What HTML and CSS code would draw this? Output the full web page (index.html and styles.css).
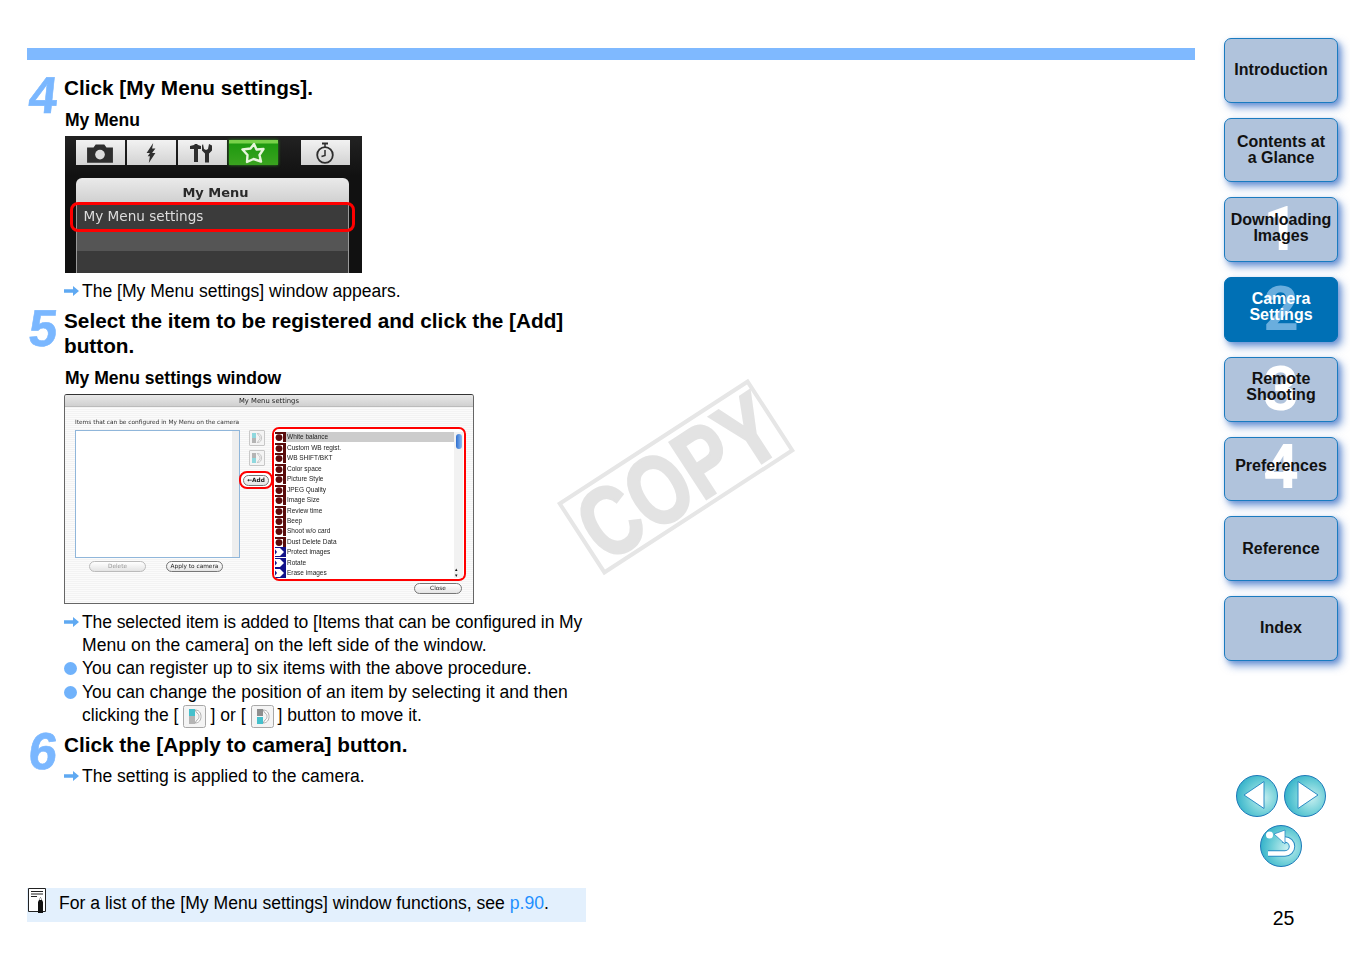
FILE: index.html
```html
<!DOCTYPE html>
<html lang="en">
<head>
<meta charset="utf-8">
<title>My Menu settings</title>
<link rel="stylesheet" href="styles.css">
</head>
<body>
<svg class="defs" width="0" height="0" aria-hidden="true">
  <symbol id="arrow" viewBox="0 0 15 10"><path d="M0 3.200h9V0l6 5-6 5V6.800H0z" fill="#5fa9f2"/></symbol>
  <symbol id="dot" viewBox="0 0 12 10"><rect width="12" height="10" fill="#fff"/><path d="M1 0h11v10H9V2H1z" fill="#5a0c0c"/><circle cx="5" cy="5.600" r="3.400" fill="#5a0c0c"/></symbol>
  <symbol id="play" viewBox="0 0 12 10"><rect width="12" height="10" fill="#12128a"/><path d="M0 1h6l4 4-4 4H0l3-4z" fill="#fff"/><rect x="0" y="0" width="1" height="10" fill="#fff"/></symbol>
  <symbol id="mover" viewBox="0 0 23 23"><rect x=".5" y=".5" width="22" height="22" rx="2" fill="#f4f4f4" stroke="#a8a8a8"/><path d="M12 5c4 0 6 3 6 6.500s-2 6.500-6 6.500l2-3c1.500-.7 2-2 2-3.500s-.5-3-2-3.500z" fill="#fff" stroke="#9a9a9a" stroke-width=".8"/></symbol>
</svg>

<div class="page">
  <main class="main">
    <div class="topbar"></div>

    <section class="step step-four">
      <div class="num"><span class="digit">4</span></div>
      <div class="body">
        <h2>Click [My Menu settings].</h2>
        <h3>My Menu</h3>
        <div class="cam">
          <div class="cam-tabs">
            <div class="tab">
              <svg width="28" height="22" viewBox="0 0 26 20"><path d="M1 5h6l2-3h8l2 3h6v14H1z" fill="#2e2e2e"/><circle cx="13" cy="11.500" r="4.500" fill="#ddd"/></svg>
            </div>
            <div class="tab">
              <svg width="14" height="22" viewBox="0 0 12 20"><path d="M8 1L2 10h3l-2 3 2 0-1 6 6-9H7l3-4H7z" fill="#2e2e2e"/></svg>
            </div>
            <div class="tab">
              <svg width="26" height="22" viewBox="0 0 26 20"><path d="M1 3l4-1 1-1h2l1 1 3 1v3H9v13H5V6H1zM14 1l1 5 2 1 2-1 1-5 3 1.500v5l-3 3v9h-4v-9l-3-3v-5z" fill="#2e2e2e"/></svg>
            </div>
            <div class="tab tab-on">
              <svg width="26" height="22" viewBox="0 0 26 22"><path d="M14 2l2.500 5.500 7-.5-4 6 1.500 6.500-7.500-2.500-6.500 3 .5-7-5-5.500 8-1z" fill="none" stroke="#e8f5dc" stroke-width="2.400" stroke-linejoin="round"/></svg>
            </div>
            <div class="tab tab-timer">
              <svg width="20" height="22" viewBox="0 0 20 22"><path d="M7 1.500h6" stroke="#2e2e2e" stroke-width="2"/><path d="M10 2v3" stroke="#2e2e2e" stroke-width="1.500"/><circle cx="10" cy="13" r="7.800" fill="none" stroke="#2e2e2e" stroke-width="1.800"/><path d="M10 8v5.500l-3.500 1" fill="none" stroke="#2e2e2e" stroke-width="1.500"/></svg>
            </div>
          </div>
          <div class="cam-menu">
            <div class="cam-title">My Menu</div>
            <div class="cam-row">My Menu settings</div>
            <div class="cam-empty"></div>
            <div class="cam-rest"></div>
            <div class="cam-ring"></div>
          </div>
        </div>
        <p class="res"><svg class="arrow"><use href="#arrow"/></svg>The [My Menu settings] window appears.</p>
      </div>
    </section>

    <section class="step step-five">
      <div class="num"><span class="digit">5</span></div>
      <div class="body">
        <h2>Select the item to be registered and click the [Add]<br>button.</h2>
        <h3 class="sub-window">My Menu settings window</h3>
        <div class="dlg">
          <div class="dlg-title">My Menu settings</div>
          <div class="dlg-body">
            <div class="dlg-label">Items that can be configured in My Menu on the camera</div>
            <div class="dlg-cols">
              <div class="left-col">
                <div class="left-list"><div class="left-scroll"></div></div>
                <div class="left-btns">
                  <span class="mac-btn btn-delete">Delete</span>
                  <span class="mac-btn btn-apply">Apply to camera</span>
                </div>
              </div>
              <div class="mid-col">
                <div class="mini"><svg width="16" height="16"><use href="#mover"/></svg><i class="t1"></i><i class="g2"></i></div>
                <div class="mini"><svg width="16" height="16"><use href="#mover"/></svg><i class="g1"></i><i class="t2"></i></div>
                <div class="add-ring"><span class="mac-btn btn-add">←Add</span></div>
              </div>
              <div class="right-col">
                <div class="list-ring">
                  <ul class="items">
                    <li class="sel"><svg><use href="#dot"/></svg>White balance</li>
                    <li><svg><use href="#dot"/></svg>Custom WB regist.</li>
                    <li><svg><use href="#dot"/></svg>WB SHIFT/BKT</li>
                    <li><svg><use href="#dot"/></svg>Color space</li>
                    <li><svg><use href="#dot"/></svg>Picture Style</li>
                    <li><svg><use href="#dot"/></svg>JPEG Quality</li>
                    <li><svg><use href="#dot"/></svg>Image Size</li>
                    <li><svg><use href="#dot"/></svg>Review time</li>
                    <li><svg><use href="#dot"/></svg>Beep</li>
                    <li><svg><use href="#dot"/></svg>Shoot w/o card</li>
                    <li><svg><use href="#dot"/></svg>Dust Delete Data</li>
                    <li><svg><use href="#play"/></svg>Protect images</li>
                    <li><svg><use href="#play"/></svg>Rotate</li>
                    <li><svg><use href="#play"/></svg>Erase images</li>
                  </ul>
                  <div class="scroll"><div class="thumb"></div><div class="sarrows">▴<br>▾</div></div>
                </div>
                <div class="close-row"><span class="mac-btn btn-close">Close</span></div>
              </div>
            </div>
          </div>
        </div>
        <div class="notes">
          <p class="res tight"><svg class="arrow"><use href="#arrow"/></svg>The selected item is added to [Items that can be configured in My<br>Menu on the camera] on the left side of the window.</p>
          <p class="bul"><i class="bullet"></i>You can register up to six items with the above procedure.</p>
          <p class="bul"><i class="bullet"></i>You can change the position of an item by selecting it and then<br>clicking the [<span class="inl"><svg width="23" height="23"><use href="#mover"/></svg><i class="t1"></i><i class="g2"></i></span>] or [<span class="inl"><svg width="23" height="23"><use href="#mover"/></svg><i class="g1"></i><i class="t2"></i></span>] button to move it.</p>
        </div>
      </div>
    </section>

    <section class="step step-six">
      <div class="num"><span class="digit">6</span></div>
      <div class="body">
        <h2>Click the [Apply to camera] button.</h2>
        <p class="res res-six"><svg class="arrow"><use href="#arrow"/></svg>The setting is applied to the camera.</p>
      </div>
    </section>

    <aside class="note">
      <svg class="note-ico" width="19" height="26" viewBox="0 0 19 26"><path d="M.5.5h17v23H.5z" fill="#fff" stroke="#222"/><path d="M3 3.500h12M3 6h12M3 8.500h6" stroke="#222"/><path d="M10 14l2.500-5 2.500 5v11h-5z" fill="#111"/><path d="M11.300 12h2.400l-1.200-2.500z" fill="#fff"/></svg>
      <span>For a list of the [My Menu settings] window functions, see <a href="#p90">p.90</a>.</span>
    </aside>

    <div class="copy"><span>COPY</span></div>
  </main>

  <nav class="side">
    <div class="btn">Introduction</div>
    <div class="btn">Contents at<br>a Glance</div>
    <div class="btn"><b class="big">1</b><span>Downloading<br>Images</span></div>
    <div class="btn btn-on"><b class="big">2</b><span>Camera<br>Settings</span></div>
    <div class="btn"><b class="big">3</b><span>Remote<br>Shooting</span></div>
    <div class="btn"><b class="big big-four">4</b><span class="one-line">Preferences</span></div>
    <div class="btn">Reference</div>
    <div class="btn">Index</div>

    <div class="arrows">
      <div class="circle"><svg width="42" height="42" viewBox="0 0 42 42"><path d="M8 21L28 7.500v27z" fill="#fff" stroke="#2a8cc4" stroke-width="1"/></svg></div>
      <div class="circle"><svg width="42" height="42" viewBox="0 0 42 42"><path d="M34 21L14 7.500v27z" fill="#fff" stroke="#2a8cc4" stroke-width="1"/></svg></div>
    </div>
    <div class="circle circle-back"><svg width="42" height="42" viewBox="0 0 42 42"><path d="M8 29.500h17a7 7 0 0 0 0-14h-3" fill="none" stroke="#2a8cc4" stroke-width="6.500"/><path d="M8 29.500h17a7 7 0 0 0 0-14h-3" fill="none" stroke="#fff" stroke-width="4.500"/><path d="M14 10l11-4v14z" fill="#fff" stroke="#2a8cc4" stroke-width=".8"/><circle cx="9.500" cy="11" r="3.500" fill="#fff"/></svg></div>
    <div class="pageno">25</div>
  </nav>
</div>
</body>
</html>
```
FILE: styles.css
```css
* { box-sizing: border-box; }
html, body { margin: 0; padding: 0; background: #fff; }
body { font-family: "Liberation Sans", Arial, sans-serif; color: #000; overflow: hidden; }
.defs { position: absolute; }
.page { display: flex; width: 1350px; height: 954px; }

.main { position: relative; width: 1195px; padding: 48px 0 0 27px; flex: none; display: flex; flex-direction: column; }
.topbar { height: 12px; background: #7fb9ff; flex: none; }

.step { display: flex; flex: none; }
.num { width: 37px; flex: none; }
.digit { display: block; height: 40px; font-size: 52px; font-weight: bold; color: #7ab7ff; line-height: 40px; -webkit-text-stroke: .6px #7ab7ff; transform: skewX(-6deg) scaleX(.98); transform-origin: 0 100%; }
.body { width: 530px; flex: none; }
h2 { margin: 0; font-size: 20.750px; line-height: 25px; font-weight: bold; }
h3 { margin: 0; font-size: 17.550px; line-height: 24px; font-weight: bold; padding-left: 1px; }
p { margin: 0; font-size: 17.550px; line-height: 23px; }
.tight { letter-spacing: .08px; }
.tight::first-line { letter-spacing: -.1px; }

.step-four { margin-top: 15px; }
.step-five { margin-top: 5px; }
.step-six { margin-top: 5px; }
.step-six .num { margin-top: -1px; }
.step-four h3 { margin-top: 8px; }
.sub-window { margin-top: 8px; }

.res { position: relative; padding-left: 18px; }
.bul { position: relative; padding-left: 18px; }
.arrow { position: absolute; left: 0; top: 6px; width: 15px; height: 10px; }
.bullet { position: absolute; left: 0; top: 5px; width: 13px; height: 13px; border-radius: 50%; background: #70b2fb; }
.step-four .res { margin-top: 7px; }
.notes { margin-top: 7px; }
.notes .bul:nth-child(3) { margin-top: 1px; }
.res-six { margin-top: 8px; }

.inl { display: inline-block; position: relative; width: 23px; height: 23px; margin: -4px 4px -4px 5px; vertical-align: middle; }
.inl svg { display: block; }
.inl i, .mini i { position: absolute; display: block; background: #b4b4b4; }
.inl i { left: 6px; width: 6px; height: 7px; }
.inl .t1 { top: 4px; background: #45c0cc; }
.inl .g2 { top: 11px; height: 8px; }
.inl .g1 { top: 4px; background: #8e8e8e; }
.inl .t2 { top: 12px; height: 7px; background: #45c0cc; }

/* Camera screenshot */
.cam { position: relative; margin: 4px 0 0 .5px; width: 297px; height: 137px; background: linear-gradient(#222, #111 40px); padding: 4px 0 0 11px; overflow: hidden; filter: blur(.35px); }
.cam-tabs { display: flex; gap: 2px; height: 25px; }
.tab { width: 49px; height: 25px; background: linear-gradient(#f2f2f2, #d2d2d2); display: flex; align-items: center; justify-content: center; }
.tab-on { background: linear-gradient(#79d24a 0, #79d24a 3px, #1f9a10 4px, #3aa31f); box-shadow: 0 0 3px #2f8f1f; }
.tab-timer { margin-left: 21px; }
.cam-menu { position: relative; width: 273px; margin-top: 13px; }
.cam-title { height: 26px; border-radius: 6px 6px 0 0; background: linear-gradient(#eaeaea, #cfcfcf); font: bold 13px/29px "DejaVu Sans", sans-serif; color: #2a2a2a; text-align: center; padding-left: 7px; }
.cam-row { height: 27px; background: #3b3b3b; border: solid #999; border-width: 0 1px; color: #ddd; font: 13.600px/25px "DejaVu Sans", sans-serif; padding-left: 7px; }
.cam-empty { height: 20px; background: #555; border: solid #999; border-width: 0 1px; }
.cam-rest { height: 30px; background: #3a3a3a; border: solid #999; border-width: 0 1px; }
.cam-ring { position: absolute; left: -6px; top: 24px; width: 285px; height: 30px; border: 3px solid #f00; border-radius: 8px; }

/* Dialog screenshot */
.dlg { margin: 4px 0 0 0; width: 410px; height: 210px; border: 1px solid #666; border-top-color: #333; border-radius: 3px 3px 0 0; background: repeating-linear-gradient(#f3f3f3 0, #f3f3f3 1px, #fbfbfb 1px, #fbfbfb 2px); filter: blur(.3px); overflow: hidden; }
.dlg-title { height: 12px; background: linear-gradient(#e8e8e8, #d0d0d0); border-bottom: 1px solid #bbb; font: 6.800px/12px "DejaVu Sans", sans-serif; text-align: center; color: #222; }
.dlg-body { padding: 11px 0 0 10px; }
.dlg-label { font: 5.830px/8px "DejaVu Sans", sans-serif; color: #333; height: 8px; white-space: nowrap; }
.dlg-cols { display: flex; margin-top: 4px; }
.left-col { width: 165px; flex: none; }
.left-list { height: 127.500px; background: #fff; border: 1.500px solid #90b6da; display: flex; justify-content: flex-end; }
.left-scroll { width: 7px; background: #eee; }
.left-btns { position: relative; display: flex; padding: 3px 0 0 14px; gap: 20px; }
.mac-btn { display: inline-block; height: 11px; border: 1px solid #777; border-radius: 6px; background: linear-gradient(#fff, #e4e4e4); font: 5.800px/9px "DejaVu Sans", sans-serif; color: #222; text-align: center; }
.btn-delete { width: 57px; color: #999; border-color: #bbb; }
.btn-apply { width: 57px; }
.mid-col { width: 32px; flex: none; padding-left: 2px; }
.mini { position: relative; width: 16px; height: 16px; margin: 0 0 4px 7px; }
.mini svg { display: block; }
.mini i { left: 3px; width: 4px; height: 5px; }
.mini .t1 { top: 3px; background: #8fd8de; }
.mini .g2 { top: 8px; }
.mini .g1 { top: 3px; }
.mini .t2 { top: 8px; background: #8fd8de; }
.add-ring { width: 34px; height: 18px; margin-top: 5px; border: 2.500px solid #f00; border-radius: 8px; background: #fff; display: flex; align-items: center; justify-content: center; margin-left: -3px; }
.btn-add { width: 26px; height: 11px; font-weight: bold; }
.right-col { width: 194px; flex: none; margin-top: -3px; margin-left: 0; }
.list-ring { display: flex; height: 154px; border: 2.500px solid #f00; border-radius: 7px; background: #fff; padding: 3px 1px 1px 0; overflow: hidden; }
.items { list-style: none; margin: 0; padding: 0; flex: 1; }
.items li { display: flex; align-items: center; height: 10.470px; font: 6.500px/10px "Liberation Sans", sans-serif; color: #222; white-space: nowrap; overflow: hidden; }
.items li svg { width: 12px; height: 10px; flex: none; margin-right: 1px; }
.items .sel { background: #ccc; }
.scroll { position: relative; width: 9px; flex: none; background: #f2f2f2; padding: 2px 1px 0 2px; }
.thumb { width: 6px; height: 15px; border-radius: 3px; background: linear-gradient(90deg, #2f6fd0, #8fbcf0); }
.sarrows { position: absolute; bottom: 0; left: 1px; font: 5px/6px "DejaVu Sans", sans-serif; color: #111; }
.close-row { display: flex; justify-content: flex-end; padding: 2px 4px 0 0; }
.btn-close { width: 48px; }

/* Note */
.note { position: relative; margin-top: 100px; width: 559px; height: 34px; background: #e3f0fd; padding-left: 32px; line-height: 30px; flex: none; font-size: 17.600px; }
.note a { color: #1e8fff; text-decoration: none; }
.note-ico { position: absolute; left: 1px; top: 0; }

/* Watermark */
.copy { position: absolute; left: 562px; top: 434px; width: 228px; height: 86px; border: 4px solid #e6e6e6; transform: rotate(-33deg); color: #e3e3e3; font-weight: bold; font-size: 98px; line-height: 76px; text-align: center; white-space: nowrap; -webkit-text-stroke: 2.500px #e3e3e3; }
.copy span { display: block; transform: translate(-5px, 2px) scaleX(.78); margin-left: -20px; margin-right: -20px; }

/* Side navigation */
.side { width: 114px; margin-left: 29px; padding-top: 38px; flex: none; display: flex; flex-direction: column; align-items: center; }
.btn { position: relative; width: 114px; height: 64.710px; margin-bottom: 15px; flex: none; border: 1.500px solid #1a7bc0; border-radius: 7px; background: #b0c3dc; box-shadow: 4px 5px 8px rgba(50, 105, 195, .6), 2px 2px 4px rgba(50, 105, 195, .35); display: flex; align-items: center; justify-content: center; text-align: center; font-size: 16px; font-weight: bold; line-height: 16px; color: #111; white-space: nowrap; }
.btn span { position: relative; top: -2px; }
.btn .one-line { top: -3px; }
.btn-on { background: #0070b5; border-color: #0070b5; color: #fff; }
.big { position: absolute; left: 0; right: 0; top: -2px; text-align: center; font-family: Roboto, "Liberation Sans", sans-serif; font-size: 62px; line-height: 66px; font-weight: bold; color: #fff; }
.big-four { top: -4px; }
.btn-on .big { color: #6aaede; }
.arrows { display: flex; gap: 6px; margin-top: 99px; }
.circle { width: 42px; height: 42px; border-radius: 50%; border: 1.500px solid #1a78b8; background: radial-gradient(circle at 65% 55%, #c8eff0 0, #6fcfd8 45%, #0f9fc0 100%); overflow: hidden; flex: none; }
.circle svg { display: block; margin: -1.500px; }
.circle-back { margin-top: 8px; }
.pageno { font-size: 19.500px; line-height: 22px; margin-top: 40px; padding-left: 5px; }
```
